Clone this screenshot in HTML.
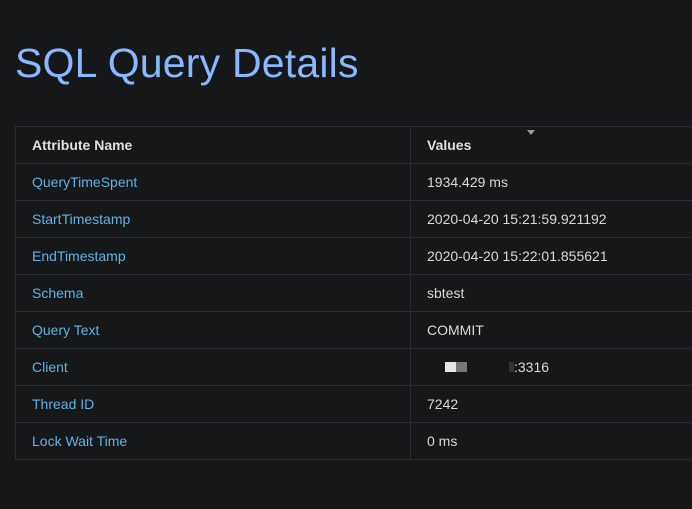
<!DOCTYPE html>
<html><head><style>
html,body{margin:0;padding:0;background:#161719;width:692px;height:509px;overflow:hidden;font-family:"Liberation Sans",sans-serif;}
h1{position:absolute;left:15px;top:38px;margin:0;font-weight:400;font-size:41px;color:#8ab8ff;letter-spacing:0.2px;line-height:50px;}
table{position:absolute;left:15px;top:126px;border-collapse:collapse;width:700px;font-size:14px;}
td,th{border:1px solid #2c2d30;height:36px;padding:0 0 0 16px;text-align:left;color:#d8d9da;}
th{font-weight:700;color:#e0e0e0;}
td:first-child,th:first-child{width:378px;}
td.k{color:#5eb3e4;}
.tri{position:absolute;left:527px;top:130px;width:0;height:0;border-left:4px solid transparent;border-right:4px solid transparent;border-top:5px solid #999;}
</style></head><body>
<h1>SQL Query Details</h1>
<div class="tri"></div>
<table>
<tr><th>Attribute Name</th><th>Values</th></tr>
<tr><td class="k">QueryTimeSpent</td><td>1934.429 ms</td></tr>
<tr><td class="k">StartTimestamp</td><td>2020-04-20 15:21:59.921192</td></tr>
<tr><td class="k">EndTimestamp</td><td>2020-04-20 15:22:01.855621</td></tr>
<tr><td class="k">Schema</td><td>sbtest</td></tr>
<tr><td class="k">Query Text</td><td>COMMIT</td></tr>
<tr><td class="k">Client</td><td><span style="display:inline-block;width:11px;height:10px;background:#e6e6e6;margin-left:18px"></span><span style="display:inline-block;width:11px;height:10px;background:#777"></span><span style="display:inline-block;width:42px"></span><span style="display:inline-block;width:5px;height:10px;background:#333"></span>:3316</td></tr>
<tr><td class="k">Thread ID</td><td>7242</td></tr>
<tr><td class="k">Lock Wait Time</td><td>0 ms</td></tr>
</table>
</body></html>
